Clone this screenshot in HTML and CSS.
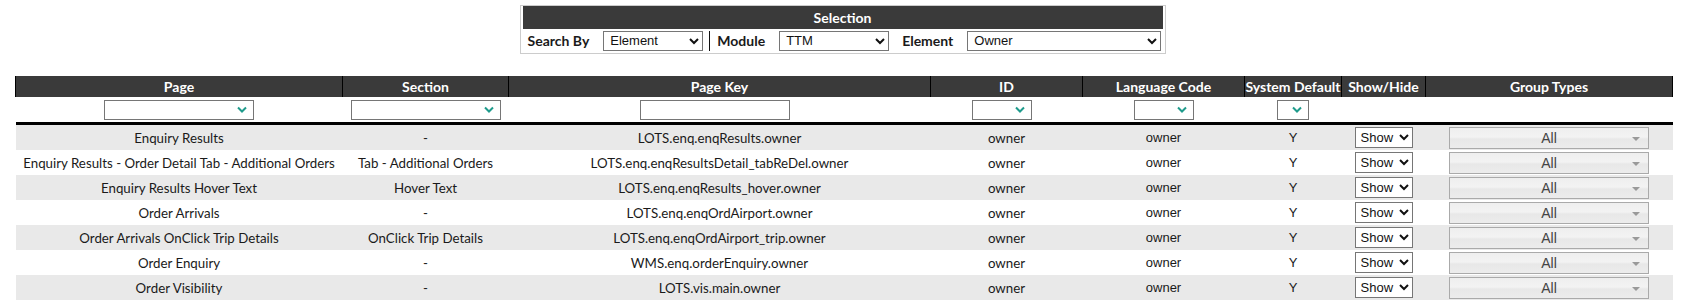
FILE: index.html
```html
<!DOCTYPE html>
<html lang="en">
<head>
	<meta charset="UTF-8">
	<meta name="viewport" content="width=device-width, initial-scale=1.0">
	<title>Language Maintenance</title>
	<link rel="stylesheet" href="styles.css">
</head>
<body>
	<div class="selection">
		<div class="selection-title">Selection</div>
		<div class="selection-row">
			<label class="sel-label">Search By</label>
			<select class="sel sel-search"><option>Element</option></select>
			<span class="sel-divider"></span>
			<label class="sel-label">Module</label>
			<select class="sel sel-module"><option>TTM</option></select>
			<label class="sel-label">Element</label>
			<select class="sel sel-element"><option>Owner</option></select>
		</div>
	</div>

	<table class="grid">
		<colgroup>
			<col class="c-page">
			<col class="c-section">
			<col class="c-key">
			<col class="c-id">
			<col class="c-lang">
			<col class="c-default">
			<col class="c-show">
			<col class="c-groups">
		</colgroup>
		<thead>
			<tr class="head">
				<th>Page</th>
				<th>Section</th>
				<th>Page Key</th>
				<th>ID</th>
				<th>Language Code</th>
				<th>System Default</th>
				<th>Show/Hide</th>
				<th>Group Types</th>
			</tr>
			<tr class="filters">
				<td><span class="filter w150"><svg viewBox="0 0 10 8" width="10" height="8"><path d="M1 1.5 L5 5.5 L9 1.5" fill="none" stroke="#1f9b8c" stroke-width="2"/></svg></span></td>
				<td><span class="filter w150"><svg viewBox="0 0 10 8" width="10" height="8"><path d="M1 1.5 L5 5.5 L9 1.5" fill="none" stroke="#1f9b8c" stroke-width="2"/></svg></span></td>
				<td><input class="filter-input shift" type="text"></td>
				<td><span class="filter w60 shift"><svg viewBox="0 0 10 8" width="10" height="8"><path d="M1 1.5 L5 5.5 L9 1.5" fill="none" stroke="#1f9b8c" stroke-width="2"/></svg></span></td>
				<td><span class="filter w60"><svg viewBox="0 0 10 8" width="10" height="8"><path d="M1 1.5 L5 5.5 L9 1.5" fill="none" stroke="#1f9b8c" stroke-width="2"/></svg></span></td>
				<td><span class="filter w32"><svg viewBox="0 0 10 8" width="10" height="8"><path d="M1 1.5 L5 5.5 L9 1.5" fill="none" stroke="#1f9b8c" stroke-width="2"/></svg></span></td>
				<td></td>
				<td></td>
			</tr>
		</thead>
		<tbody>
			<tr>
				<td>Enquiry Results</td>
				<td>-</td>
				<td>LOTS.enq.enqResults.owner</td>
				<td>owner</td>
				<td class="plain">owner</td>
				<td class="plain">Y</td>
				<td><select class="show"><option>Show</option></select></td>
				<td><span class="groups">All<i class="caret"></i></span></td>
			</tr>
			<tr>
				<td>Enquiry Results - Order Detail Tab - Additional Orders</td>
				<td>Tab - Additional Orders</td>
				<td>LOTS.enq.enqResultsDetail_tabReDel.owner</td>
				<td>owner</td>
				<td class="plain">owner</td>
				<td class="plain">Y</td>
				<td><select class="show"><option>Show</option></select></td>
				<td><span class="groups">All<i class="caret"></i></span></td>
			</tr>
			<tr>
				<td>Enquiry Results Hover Text</td>
				<td>Hover Text</td>
				<td>LOTS.enq.enqResults_hover.owner</td>
				<td>owner</td>
				<td class="plain">owner</td>
				<td class="plain">Y</td>
				<td><select class="show"><option>Show</option></select></td>
				<td><span class="groups">All<i class="caret"></i></span></td>
			</tr>
			<tr>
				<td>Order Arrivals</td>
				<td>-</td>
				<td>LOTS.enq.enqOrdAirport.owner</td>
				<td>owner</td>
				<td class="plain">owner</td>
				<td class="plain">Y</td>
				<td><select class="show"><option>Show</option></select></td>
				<td><span class="groups">All<i class="caret"></i></span></td>
			</tr>
			<tr>
				<td>Order Arrivals OnClick Trip Details</td>
				<td>OnClick Trip Details</td>
				<td>LOTS.enq.enqOrdAirport_trip.owner</td>
				<td>owner</td>
				<td class="plain">owner</td>
				<td class="plain">Y</td>
				<td><select class="show"><option>Show</option></select></td>
				<td><span class="groups">All<i class="caret"></i></span></td>
			</tr>
			<tr>
				<td>Order Enquiry</td>
				<td>-</td>
				<td>WMS.enq.orderEnquiry.owner</td>
				<td>owner</td>
				<td class="plain">owner</td>
				<td class="plain">Y</td>
				<td><select class="show"><option>Show</option></select></td>
				<td><span class="groups">All<i class="caret"></i></span></td>
			</tr>
			<tr>
				<td>Order Visibility</td>
				<td>-</td>
				<td>LOTS.vis.main.owner</td>
				<td>owner</td>
				<td class="plain">owner</td>
				<td class="plain">Y</td>
				<td><select class="show"><option>Show</option></select></td>
				<td><span class="groups">All<i class="caret"></i></span></td>
			</tr>
		</tbody>
	</table>
</body>
</html>
```

FILE: styles.css
```css
body {
	margin: 0;
	font-family: "Segoe UI", Lato, "Noto Sans", sans-serif;
	font-size: 13px;
	color: #1a1a1a;
	background: #fff;
}

/* selection box */
.selection {
	box-sizing: border-box;
	width: 646px;
	margin: 5px auto 0;
	border: 1px solid #ccc;
	padding: 0 2px 1px;
}
.selection-title {
	height: 23px;
	line-height: 23px;
	background-color: #3a3a3a;
	color: #fff;
	font-size: 14px;
	font-weight: bold;
	text-align: center;
}
.selection-row {
	display: flex;
	align-items: center;
	height: 23px;
	padding-left: 5px;
}
.sel-label {
	font-size: 14px;
	font-weight: bold;
	margin-right: 14px;
}
.sel {
	height: 20px;
	font-family: "Liberation Sans", Arial, sans-serif;
	font-size: 13px;
	color: #111;
	border: 1px solid #767676;
	border-radius: 0;
	background: #fff;
	padding: 0 2px;
}
.sel-search {
	width: 100px;
}
.sel-module {
	width: 110px;
	margin-right: 13px;
}
.sel-element {
	width: 194px;
}
.sel-divider {
	width: 1px;
	height: 20px;
	background: #111;
	margin: 0 7px 0 6px;
}

/* main grid */
.grid {
	table-layout: fixed;
	border-collapse: collapse;
	width: 1657px;
	margin: 22px 0 0 15px;
}
.c-page { width: 327px; }
.c-section { width: 166px; }
.c-key { width: 422px; }
.c-id { width: 152px; }
.c-lang { width: 162px; }
.c-default { width: 97px; }
.c-show { width: 84px; }
.c-groups { width: 247px; }

.grid td, .grid th {
	padding: 0;
	text-align: center;
	white-space: nowrap;
}
.head th {
	height: 21px;
	background-color: #3a3a3a;
	color: #fff;
	font-size: 14px;
	font-weight: bold;
	border-left: 1px solid #000;
	border-right: 1px solid #000;
}
.filters td {
	height: 25px;
	background: #fff;
}
.filter {
	box-sizing: border-box;
	display: inline-flex;
	align-items: center;
	justify-content: flex-end;
	height: 20px;
	padding-right: 6px;
	border: 1px solid #767676;
	vertical-align: middle;
}
.w150 { width: 150px; }
.w60 { width: 60px; }
.w32 { width: 32px; }
.shift {
	margin-right: 10px;
}
.filter-input {
	box-sizing: border-box;
	width: 150px;
	height: 20px;
	border: 1px solid #767676;
	padding: 0;
	vertical-align: middle;
}

.grid tbody tr:first-child td {
	border-top: 3px solid #000;
}
.grid tbody td {
	height: 25px;
	font-size: 13.3px;
}
.grid tbody tr:nth-child(odd) {
	background-color: #e9e9e9;
}
.grid tbody tr:nth-child(even) {
	background-color: #fff;
}
.grid tbody td.plain {
	font-family: "Liberation Sans", Arial, sans-serif;
	font-size: 13px;
}
.show {
	width: 58px;
	height: 21px;
	font-family: "Liberation Sans", Arial, sans-serif;
	font-size: 13px;
	color: #111;
	border: 1px solid #767676;
	border-radius: 0;
	background: #fff;
	padding: 0 1px;
	vertical-align: middle;
}
.groups {
	box-sizing: border-box;
	display: inline-flex;
	align-items: center;
	justify-content: center;
	position: relative;
	width: 200px;
	height: 22px;
	border: 1px solid #aaa;
	background: linear-gradient(#eeeeee, #f3f3f3 45%, #e8e8e8 55%, #ececec);
	color: #444;
	font-family: "Liberation Sans", Arial, sans-serif;
	font-size: 14px;
	vertical-align: middle;
}
.caret {
	position: absolute;
	right: 8px;
	top: 9px;
	border-left: 4px solid transparent;
	border-right: 4px solid transparent;
	border-top: 4px solid #999;
}
```
